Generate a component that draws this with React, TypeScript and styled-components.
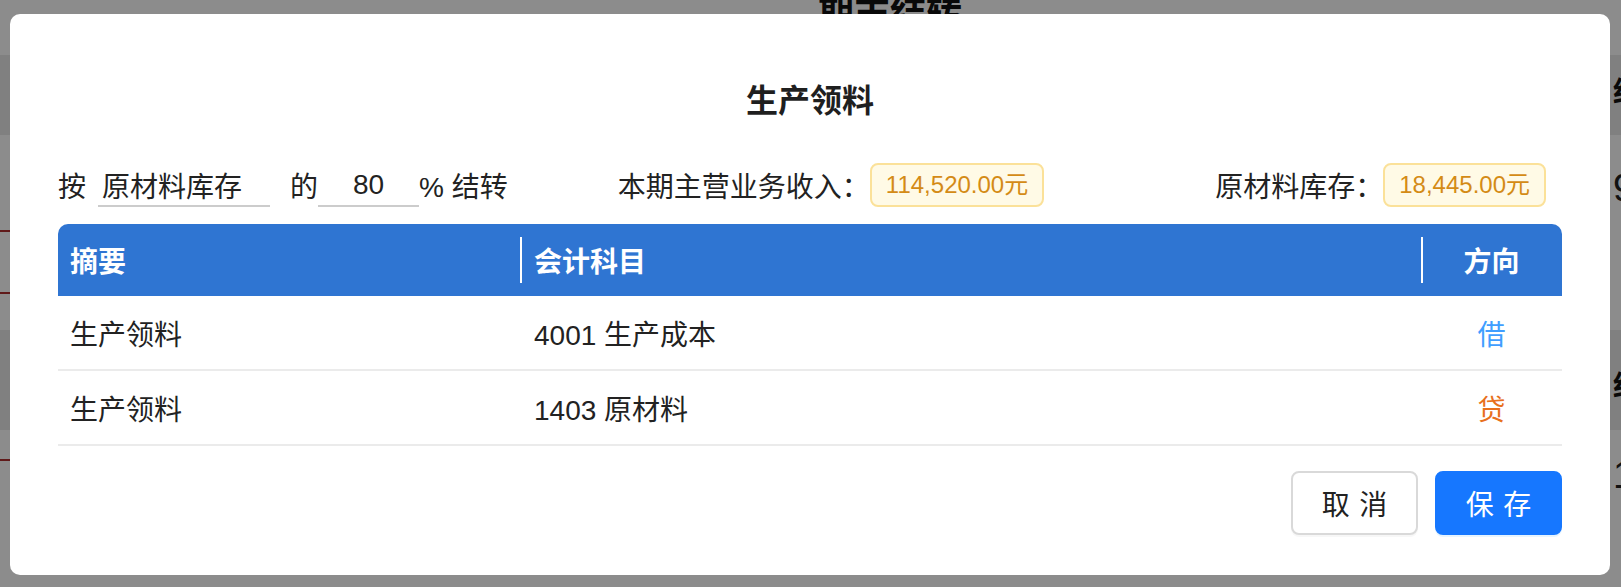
import React from 'react';
import styled, { createGlobalStyle } from 'styled-components';

const GlobalStyle = createGlobalStyle`
  html, body {
    margin: 0;
    padding: 0;
  }
  body {
    width: 1621px;
    height: 587px;
    overflow: hidden;
    background: #ffffff;
    font-family: "Liberation Sans", "Noto Sans CJK SC", sans-serif;
  }
`;

/* page behind the dialog */

const Page = styled.div`
  display: flex;
  flex-direction: column;
  height: 587px;
  background: #ffffff;
`;

const Band = styled.div<{ $h: number; $bg?: string }>`
  display: grid;
  grid-template-columns: 1612px 1fr;
  height: ${(p) => p.$h}px;
  background: ${(p) => p.$bg || '#ffffff'};
  overflow: hidden;
`;

const BandMain = styled.div<{ $center?: boolean }>`
  display: flex;
  flex-direction: column;
  align-items: ${(p) => (p.$center ? 'center' : 'stretch')};
  padding-left: ${(p) => (p.$center ? '168px' : '0')};
`;

const PageTitle = styled.h1`
  margin: -4px 0 0;
  font-size: 36px;
  line-height: 36px;
  font-weight: 700;
  color: #111;
`;

const RedRule = styled.div<{ $top: number }>`
  margin-top: ${(p) => p.$top}px;
  height: 2px;
  width: 40px;
  background: #b03030;
`;

const SideCell = styled.div<{ $pad: number }>`
  padding-top: ${(p) => p.$pad}px;
  padding-left: 1px;
  white-space: nowrap;
`;

const SideLabel = styled.span`
  font-size: 28px;
  line-height: 28px;
  font-weight: 700;
  color: #111;
`;

const SideValue = styled.span`
  font-size: 38px;
  line-height: 38px;
  color: #222;
`;

/* dialog */

const Overlay = styled.div`
  position: fixed;
  inset: 0;
  background: rgba(0, 0, 0, 0.45);
  display: flex;
  align-items: flex-start;
  padding: 14px 0 0 10px;
`;

const Dialog = styled.div`
  width: 1600px;
  box-sizing: border-box;
  padding: 63px 48px 40px;
  background: #ffffff;
  border-radius: 10px;
  color: #222;
`;

const Title = styled.h2`
  margin: 0;
  font-size: 32px;
  line-height: 48px;
  font-weight: 700;
  text-align: center;
  color: #1f1f1f;
`;

const FilterRow = styled.div`
  display: flex;
  align-items: center;
  height: 44px;
  margin-top: 38px;
  padding-right: 16px;
  font-size: 28px;
  color: #222;
`;

const RuleGroup = styled.div`
  flex: 1;
  display: flex;
  align-items: center;
`;

const Word = styled.span<{ $gap?: number }>`
  margin-right: ${(p) => p.$gap ?? 0}px;
  white-space: nowrap;
`;

const LineInput = styled.input<{ $w: number; $center?: boolean; $gap?: number }>`
  width: ${(p) => p.$w}px;
  height: 44px;
  box-sizing: border-box;
  margin: 0 ${(p) => p.$gap ?? 0}px 0 0;
  padding: 2px 4px 0;
  border: none;
  border-bottom: 2px solid #cccccc;
  background: transparent;
  outline: none;
  font-family: inherit;
  font-size: 28px;
  color: #222;
  text-align: ${(p) => (p.$center ? 'center' : 'left')};
`;

const Stat = styled.div<{ $offset?: number }>`
  display: flex;
  align-items: center;
  margin-left: ${(p) => p.$offset ?? 0}px;
  white-space: nowrap;
`;

const Badge = styled.span`
  height: 44px;
  box-sizing: border-box;
  padding: 0 14px;
  border: 2px solid #fbe199;
  border-radius: 8px;
  background: #fffae6;
  color: #d48b16;
  font-size: 24px;
  line-height: 40px;
`;

const Table = styled.div`
  display: grid;
  grid-template-columns: 462px 901px 141px;
  margin-top: 17px;
`;

const HeadCell = styled.div<{ $divider?: boolean; $center?: boolean; $first?: boolean; $last?: boolean }>`
  position: relative;
  display: flex;
  align-items: center;
  justify-content: ${(p) => (p.$center ? 'center' : 'flex-start')};
  height: 72px;
  padding: 0 ${(p) => (p.$first ? 12 : 14)}px;
  background: #2f75d2;
  color: #ffffff;
  font-size: 28px;
  font-weight: 700;
  border-top-left-radius: ${(p) => (p.$first ? 10 : 0)}px;
  border-top-right-radius: ${(p) => (p.$last ? 10 : 0)}px;

  &::before {
    content: '';
    display: ${(p) => (p.$divider ? 'block' : 'none')};
    position: absolute;
    left: 0;
    top: 13px;
    bottom: 13px;
    width: 2px;
    background: #ffffff;
  }
`;

const Cell = styled.div<{ $center?: boolean; $first?: boolean; $color?: string }>`
  display: flex;
  align-items: center;
  justify-content: ${(p) => (p.$center ? 'center' : 'flex-start')};
  height: 73px;
  padding: 0 ${(p) => (p.$first ? 12 : 14)}px;
  border-bottom: 2px solid #ebebeb;
  font-size: 28px;
  color: ${(p) => p.$color || '#222'};
`;

const Footer = styled.div`
  display: flex;
  justify-content: flex-end;
  gap: 17px;
  margin-top: 25px;
`;

const Button = styled.button<{ $primary?: boolean }>`
  display: inline-flex;
  align-items: center;
  justify-content: center;
  width: 127px;
  height: 64px;
  padding: 0;
  white-space: nowrap;
  border-radius: 8px;
  border: 2px solid ${(p) => (p.$primary ? '#1677ff' : '#d9d9d9')};
  background: ${(p) => (p.$primary ? '#1677ff' : '#ffffff')};
  color: ${(p) => (p.$primary ? '#ffffff' : '#222')};
  box-shadow: ${(p) => (p.$primary ? '0 2px 0 rgba(5, 145, 255, 0.1)' : '0 2px 0 rgba(0, 0, 0, 0.03)')};
  font-family: inherit;
  font-size: 28px;
  cursor: pointer;

  span {
    letter-spacing: 0.34em;
    margin-right: -0.34em;
  }
`;

const rows = [
  { summary: '生产领料', account: '4001 生产成本', dir: '借', color: '#409eff' },
  { summary: '生产领料', account: '1403 原材料', dir: '贷', color: '#e8701c' },
];

export default function App() {
  return (
    <>
      <GlobalStyle />
      <Page>
        <Band $h={55}>
          <BandMain $center>
            <PageTitle>期末结转</PageTitle>
          </BandMain>
          <div />
        </Band>
        <Band $h={80} $bg="#e9e9e9">
          <BandMain />
          <SideCell $pad={24}>
            <SideLabel>结转金额</SideLabel>
          </SideCell>
        </Band>
        <Band $h={195}>
          <BandMain>
            <RedRule $top={95} />
            <RedRule $top={60} />
          </BandMain>
          <SideCell $pad={34}>
            <SideValue>9,860.00</SideValue>
          </SideCell>
        </Band>
        <Band $h={100} $bg="#e9e9e9">
          <BandMain />
          <SideCell $pad={43}>
            <SideLabel>结转金额</SideLabel>
          </SideCell>
        </Band>
        <Band $h={157}>
          <BandMain>
            <RedRule $top={29} />
          </BandMain>
          <SideCell $pad={26}>
            <SideValue>1,240.00</SideValue>
          </SideCell>
        </Band>
      </Page>

      <Overlay>
        <Dialog>
          <Title>生产领料</Title>

          <FilterRow>
            <RuleGroup>
              <Word $gap={12}>按</Word>
              <LineInput $w={172} $gap={20} defaultValue="原材料库存" />
              <Word>的</Word>
              <LineInput $w={101} $center defaultValue="80" />
              <Word>% 结转</Word>
            </RuleGroup>
            <Stat>
              <Word>本期主营业务收入：</Word>
              <Badge>114,520.00元</Badge>
            </Stat>
            <Stat $offset={171}>
              <Word>原材料库存：</Word>
              <Badge>18,445.00元</Badge>
            </Stat>
          </FilterRow>

          <Table>
            <HeadCell $first>摘要</HeadCell>
            <HeadCell $divider>会计科目</HeadCell>
            <HeadCell $divider $center $last>方向</HeadCell>
            {rows.map((r, i) => (
              <React.Fragment key={i}>
                <Cell $first>{r.summary}</Cell>
                <Cell>{r.account}</Cell>
                <Cell $center $color={r.color}>{r.dir}</Cell>
              </React.Fragment>
            ))}
          </Table>

          <Footer>
            <Button>
              <span>取消</span>
            </Button>
            <Button $primary>
              <span>保存</span>
            </Button>
          </Footer>
        </Dialog>
      </Overlay>
    </>
  );
}
